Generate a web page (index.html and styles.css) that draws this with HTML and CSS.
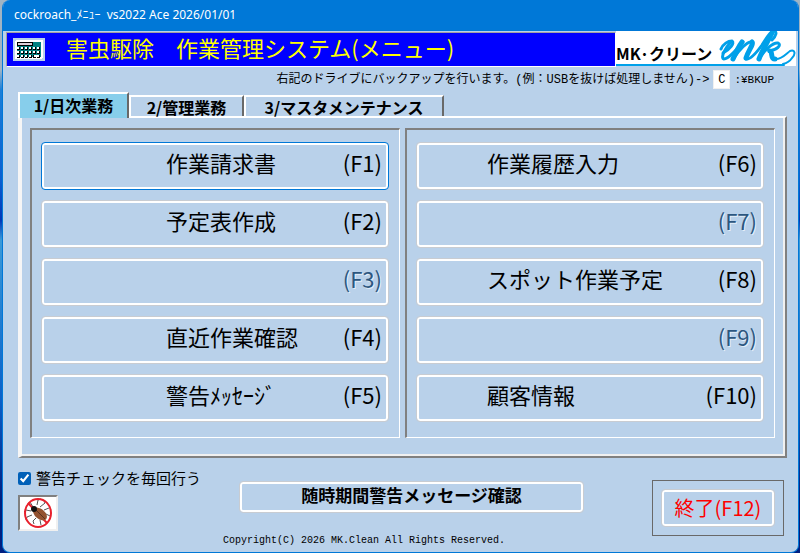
FILE: index.html
```html
<!DOCTYPE html>
<html lang="ja">
<head>
  <meta charset="UTF-8">
  <title>cockroach_ﾒﾆｭｰ</title>
  <link rel="stylesheet" href="styles.css">
</head>
<body>
  <div class="window">
    <div class="titlebar">cockroach_ﾒﾆｭｰ&nbsp; vs2022 Ace 2026/01/01</div>

    <header class="header">
      <div class="banner">
        <svg class="banner-icon" width="32" height="23" viewBox="0 0 32 23" shape-rendering="crispEdges">
          <rect width="32" height="23" fill="#b9d1ea"/>
          <rect x="2" y="2" width="28" height="19" rx="2" fill="#fff"/>
          <path d="M4 4h24v15H4z" fill="#008080"/>
          <path d="M4 4h16v4H4z" fill="#000"/>
          <path d="M5 5h14v2H5z" fill="#dcd0d8"/>
          <path d="M4 10.500h24M4 14.500h24M4 18.500h24" stroke="#000" stroke-width="3" stroke-dasharray="3 1"/>
          <path d="M4 10h24M4 14h24M4 18h16" stroke="#fff" stroke-width="2" stroke-dasharray="2 2"/>
          <path d="M21 17h5v2h-5z" fill="#fff"/>
        </svg>
        <h1>害虫駆除　作業管理システム(メニュー)</h1>
      </div>
      <div class="logo">
        <span>MK·クリーン</span>
        <svg width="78" height="35" viewBox="102 0 78 35" fill="none" stroke="#00a0e9" stroke-linecap="round" stroke-linejoin="round">
          <path d="M105 18C107 13 112 10 116 10C119 12 114 18 107 22" stroke-width="3"/>
          <path d="M115 11C109 17 104 27 108 28C113 28 121 18 127 11" stroke-width="3"/>
          <path d="M126 11C123 15 120 21 117 28" stroke-width="5"/>
          <path d="M118 27C123 19 131 10 136 11" stroke-width="3"/>
          <path d="M136 11C138 13 132 20 130 27" stroke-width="5"/>
          <path d="M130 28C134 29 141 21 146 14C150 8 153 2 157 0C162 0 160 5 156 9" stroke-width="3"/>
          <path d="M156 2C151 12 146 20 143 28" stroke-width="5"/>
          <path d="M145 25C149 19 157 11 162 12C166 14 161 19 153 20" stroke-width="3"/>
          <path d="M154 20C157 21 154 28 159 28" stroke-width="5"/>
          <path d="M159 28C165 29 170 23 174 20C179 18 180 23 176 27C174 30 171 32 167 33" stroke-width="2"/>
          <path d="M102 34H168" stroke-width="2"/>
        </svg>
      </div>
    </header>

    <div class="backup">
      <label for="drive">右記のドライブにバックアップを行います。(例：USBを抜けば処理しません)-&gt;</label>
      <input id="drive" type="text" value="C" maxlength="1">
      <span>:¥BKUP</span>
    </div>

    <main>
      <div class="tabs" role="tablist">
        <button class="tab active" role="tab" aria-selected="true">1/日次業務</button>
        <button class="tab" role="tab" aria-selected="false">2/管理業務</button>
        <button class="tab wide" role="tab" aria-selected="false">3/マスタメンテナンス</button>
      </div>

      <div class="panel" role="tabpanel">
        <div class="group">
          <button class="menu-btn focused"><span>作業請求書</span><span>(F1)</span></button>
          <button class="menu-btn"><span>予定表作成</span><span>(F2)</span></button>
          <button class="menu-btn" disabled><span></span><span>(F3)</span></button>
          <button class="menu-btn"><span>直近作業確認</span><span>(F4)</span></button>
          <button class="menu-btn"><span>警告ﾒｯｾｰｼﾞ</span><span>(F5)</span></button>
        </div>
        <div class="group group-right">
          <button class="menu-btn"><span>作業履歴入力</span><span>(F6)</span></button>
          <button class="menu-btn" disabled><span></span><span>(F7)</span></button>
          <button class="menu-btn"><span>スポット作業予定</span><span>(F8)</span></button>
          <button class="menu-btn" disabled><span></span><span>(F9)</span></button>
          <button class="menu-btn"><span>顧客情報</span><span>(F10)</span></button>
        </div>
      </div>
    </main>

    <footer class="footer">
      <div class="footer-left">
        <label class="check"><input type="checkbox" checked>警告チェックを毎回行う</label>
        <div class="picture">
          <svg width="36" height="32" viewBox="0 0 36 32" fill="none">
            <path d="M13 10L10 5M17 8L18 3L21 2M20 10L25 6L24 4M24 13L29 11M11 14L6 13L4 15M12 18L7 20L6 23M16 21L13 24L14 27M20 23L21 28M26 17L30 19" stroke="#555"/>
            <path d="M8 6l19 20" stroke="#e8202c" stroke-width="2"/>
            <ellipse cx="20" cy="17" rx="8" ry="5" transform="rotate(40 20 17)" fill="#935331"/>
            <path d="M15 12l10 10" stroke="#5a3320"/>
            <circle cx="14" cy="12" r="3" fill="#111"/>
            <ellipse cx="18" cy="16" rx="13" ry="14" stroke="#e8202c" stroke-width="2"/>
          </svg>
        </div>
      </div>
      <div class="footer-center">
        <button class="message-btn">随時期間警告メッセージ確認</button>
        <p>Copyright(C) 2026 MK.Clean All Rights Reserved.</p>
      </div>
      <div class="exit-frame">
        <button class="exit-btn">終了(F12)</button>
      </div>
    </footer>
  </div>
</body>
</html>
```
FILE: styles.css
```css
* {
  box-sizing: border-box;
}
body {
  margin: 0;
  padding: 0 1px 0 2px;
  background: linear-gradient(#9fb4c4 0, #9fb4c4 70px, #1c7fd8 90px, #0a5fd0 180px, #0038b8 220px, #3a9ad8 240px, #0a60c8 400px, #001f80 500px);
  font-family: "Noto Sans CJK JP", sans-serif;
  color: #000;
}
.window {
  display: flex;
  flex-direction: column;
  min-height: 100vh;
  background: #b9d1ea;
  border: 1px solid #0078d7;
  border-top: 0;
  border-radius: 8px;
  overflow: hidden;
}
.titlebar {
  height: 31px;
  padding-left: 11px;
  background: #0078d7;
  color: #fff;
  font: 12px/30px "Noto Sans", "Noto Sans CJK JP", sans-serif;
}

.header {
  display: flex;
  height: 36px;
  padding: 0 2px 0 3px;
}
.banner {
  flex: 1;
  display: flex;
  align-items: center;
  gap: 21px;
  margin-top: 1px;
  padding-left: 6px;
  background: #00f;
  border: 1px solid #fff;
  border-top-color: #a0a0a0;
  border-left-color: #a0a0a0;
}
h1 {
  margin: 0;
  padding-bottom: 6px;
  color: #ff0;
  font-size: 22px;
  font-weight: 400;
  line-height: 28px;
}
.logo {
  display: flex;
  align-items: flex-end;
  width: 180px;
  height: 35px;
  background: #fff;
}
.logo span {
  flex: 1;
  border-bottom: 2px solid #00a0e9;
  font-size: 16px;
  font-weight: 700;
  line-height: 22px;
  white-space: nowrap;
}
.logo svg {
  flex: none;
}

.backup {
  display: flex;
  align-items: center;
  justify-content: flex-end;
  gap: 4px;
  height: 25px;
  padding-right: 24px;
  font: 12px/20px "Liberation Mono", "Noto Sans CJK JP", monospace;
  white-space: nowrap;
}
.backup input {
  width: 17px;
  height: 19px;
  padding: 0;
  border: 1px solid #f0f0f0;
  background: #fff;
  font: inherit;
  text-align: center;
}
.backup span {
  font-size: 11px;
}

main {
  padding: 0 11px 0 15px;
}
.tabs {
  display: flex;
  align-items: flex-end;
  height: 24px;
}
.tab {
  width: 115px;
  height: 21px;
  padding: 0;
  background: #b9d1ea;
  border: 0 solid #fff;
  border-width: 2px 2px 0 2px;
  border-right-color: #696969;
  font: 700 16px/16px "Noto Sans CJK JP", sans-serif;
  white-space: nowrap;
}
.tab.active {
  z-index: 1;
  width: 111px;
  height: 26px;
  margin-bottom: -2px;
  padding-bottom: 3px;
  background: #87ceeb;
}
.tab.wide {
  width: 200px;
}
.panel {
  display: flex;
  gap: 5px;
  padding: 10px 10px 18px 8px;
  border: 2px solid #808080;
  border-top-color: #fff;
  border-left: 4px solid #f6f6f6;
  box-shadow: inset -2px -2px #f0f0f0;
}
.group {
  flex: 1;
  display: flex;
  flex-direction: column;
  gap: 10px;
  padding: 12px 10px 15px 9px;
  border: 1px solid #fff;
  border-top: 2px solid #808080;
  border-left: 2px solid #808080;
}

button {
  color: #000;
  font-family: "Noto Sans CJK JP", sans-serif;
}
.menu-btn,
.message-btn,
.exit-btn {
  background: #b9d1ea;
  border: 1px solid #c8ccd2;
  border-radius: 4px;
  box-shadow: inset 0 0 0 2px #fff;
}
.menu-btn {
  display: flex;
  align-items: center;
  justify-content: space-between;
  height: 48px;
  padding: 0 6px 8px 124px;
  font-size: 22px;
  line-height: 30px;
}
.group-right .menu-btn {
  padding-left: 70px;
}
.menu-btn.focused {
  border-color: #0078d7;
}
.menu-btn:disabled {
  color: #2c567f;
  text-shadow: 1px 1px #e4eef8;
}

.footer {
  flex: 1;
  display: grid;
  grid-template-columns: 205px 1fr 200px;
  padding: 11px 14px 0 15px;
}
.check {
  display: flex;
  align-items: center;
  gap: 5px;
  font-size: 15px;
  line-height: 18px;
  white-space: nowrap;
}
.check input {
  width: 13px;
  height: 13px;
  margin: 0;
  accent-color: #0060b8;
}
.picture {
  width: 40px;
  height: 36px;
  margin-top: 8px;
  background: #fff;
  border: 2px solid #f0f0f0;
  border-top-color: #808080;
  border-left-color: #808080;
}
.picture svg {
  display: block;
}
.footer-center {
  display: flex;
  flex-direction: column;
  padding-top: 12px;
}
.message-btn {
  height: 32px;
  margin-left: 16px;
  padding: 0 0 4px;
  font-size: 17px;
  font-weight: 700;
  line-height: 24px;
}
.footer-center p {
  margin: 20px 0 0;
  font: 10px/16px "Liberation Mono", monospace;
  white-space: nowrap;
}
.exit-frame {
  justify-self: end;
  align-self: start;
  width: 132px;
  margin-top: 11px;
  padding: 8px;
  border: 1px solid #696969;
}
.exit-btn {
  display: block;
  width: 100%;
  height: 38px;
  padding: 0;
  color: #f00;
  font-size: 20px;
  line-height: 28px;
}
```
